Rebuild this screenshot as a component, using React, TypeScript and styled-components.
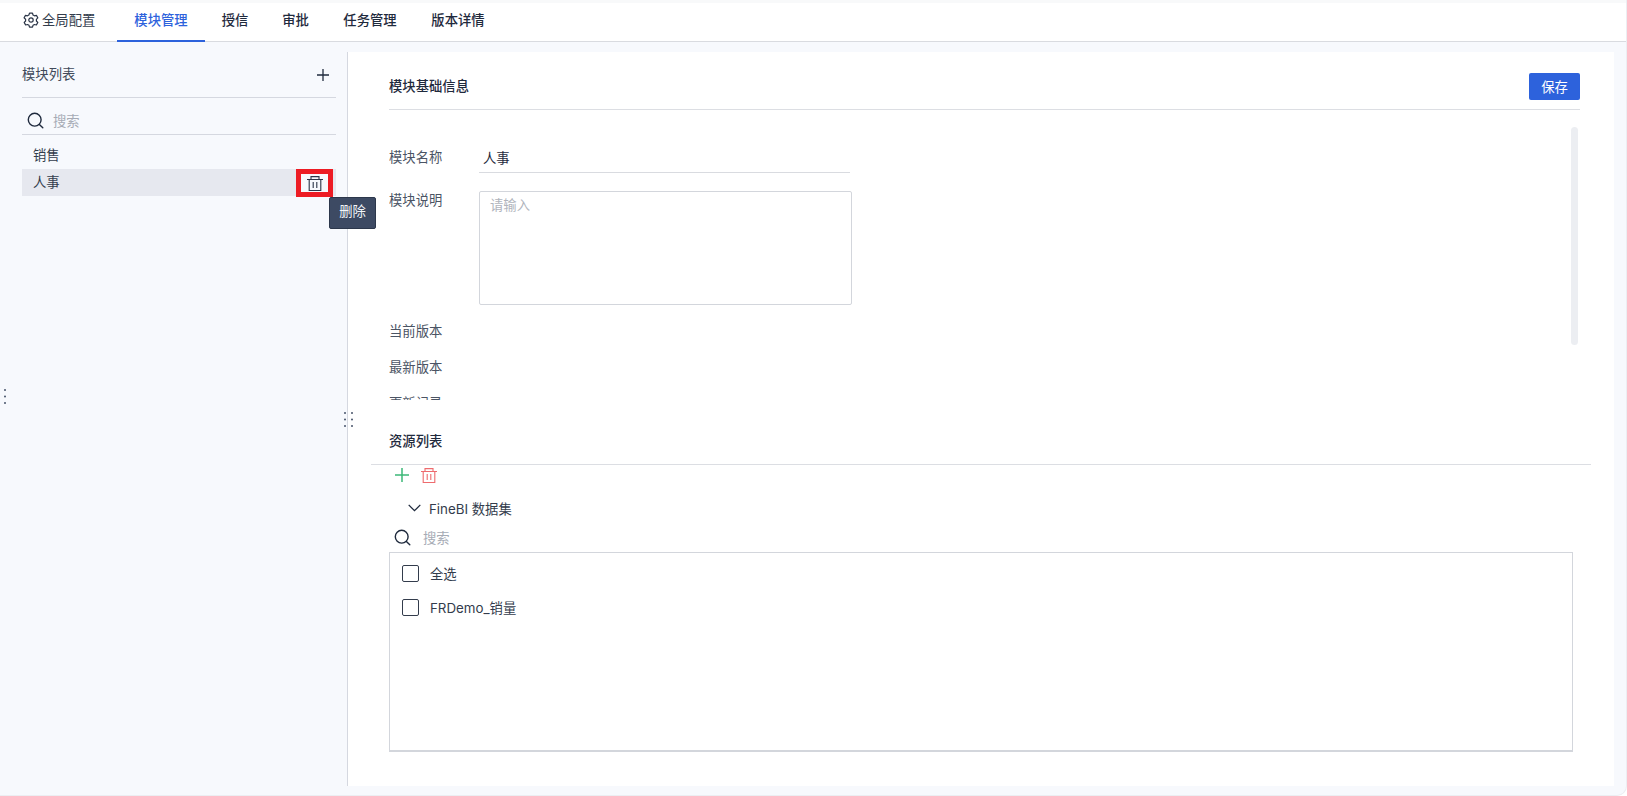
import styled, { createGlobalStyle } from "styled-components";

const GlobalStyle = createGlobalStyle`
    html, body {
        margin: 0;
        padding: 0;
        background: #ffffff;
        font-family: Inter, "Noto Sans CJK SC", "Liberation Sans", sans-serif;
    }
    * {
        box-sizing: border-box;
    }
`;

const Page = styled.div`
    position: relative;
    width: 1627px;
    height: 796px;
    display: flex;
    flex-direction: column;
    overflow: hidden;
    background: #f7f9fd;
    border-bottom-right-radius: 10px;
    border-right: 1px solid #eceef2;
    border-bottom: 1px solid #eceef2;
    font-size: 13.33px;
    color: #1f2a3d;
`;

const Header = styled.div`
    height: 42px;
    flex: none;
    display: flex;
    align-items: stretch;
    background: #fff;
    border-top: 3px solid #f8f9fa;
    border-bottom: 1px solid #d9dbe0;
    padding-left: 23px;
`;

const GlobalTab = styled.div`
    width: 94px;
    display: flex;
    align-items: center;
    gap: 3px;
    padding-bottom: 5px;
    color: #333c4c;
`;

const Tab = styled.div<{ $active?: boolean; $width: number }>`
    width: ${(p) => p.$width}px;
    display: flex;
    align-items: center;
    justify-content: center;
    padding-bottom: 5px;
    margin-bottom: -1px;
    font-weight: 500;
    color: ${(p) => (p.$active ? "#2d62dc" : "#1f2a3d")};
    border-bottom: 2px solid ${(p) => (p.$active ? "#2d62dc" : "transparent")};
`;

const Body = styled.div`
    flex: 1;
    min-height: 0;
    display: flex;
    padding: 10px 12px 9px 0;
`;

const Sidebar = styled.div`
    width: 348px;
    flex: none;
    padding: 0 11px 0 22px;
    border-right: 1px solid #d5d8e0;
`;

const SideHead = styled.div`
    height: 46px;
    display: flex;
    align-items: center;
    justify-content: space-between;
    padding-right: 7px;
    border-bottom: 1px solid #d5d8e0;
    color: #414a5a;
`;

const SideTitle = styled.span`
    margin-bottom: 3px;
`;

const SearchRow = styled.div<{ $gap: number; $pad: number; $height: number }>`
    height: ${(p) => p.$height}px;
    display: flex;
    align-items: center;
    gap: ${(p) => p.$gap}px;
    padding-left: ${(p) => p.$pad}px;
    color: #a6abb5;
`;

const SideSearch = styled(SearchRow)`
    padding-top: 8px;
    border-bottom: 1px solid #d5d8e0;
`;

const ResourceSearch = styled(SearchRow)`
    padding-bottom: 2px;
`;

const ModuleList = styled.div`
    margin-top: 7px;
`;

const ModuleRow = styled.div<{ $selected?: boolean }>`
    position: relative;
    height: 27px;
    display: flex;
    align-items: center;
    padding: 0 0 2px 11px;
    background: ${(p) => (p.$selected ? "#e6e8ef" : "transparent")};
    color: #333c4c;
`;

const RedMark = styled.div`
    position: absolute;
    right: 3px;
    top: 0;
    width: 37px;
    height: 28px;
    display: flex;
    align-items: center;
    justify-content: center;
    background: #f7f9fd;
    border: 5px solid #ed1c24;
`;

const Tooltip = styled.div`
    position: absolute;
    left: 329px;
    top: 197px;
    width: 47px;
    height: 32px;
    display: flex;
    align-items: center;
    justify-content: center;
    padding-bottom: 5px;
    border-radius: 2px;
    border: 1px solid #2c374b;
    background: #3d4a63;
    color: #f2f5f9;
    z-index: 3;
`;

const Main = styled.div`
    flex: 1;
    min-width: 0;
    display: flex;
    flex-direction: column;
    background: #fff;
`;

const TopSection = styled.div`
    position: relative;
    height: 348px;
    flex: none;
    display: flex;
    flex-direction: column;
    padding: 0 34px 0 41px;
`;

const TitleRow = styled.div`
    height: 58px;
    flex: none;
    display: flex;
    align-items: flex-start;
    justify-content: space-between;
    padding-top: 21px;
    border-bottom: 1px solid #dcdee3;
`;

const SectionTitle = styled.div`
    font-weight: 500;
    line-height: 27px;
    color: #1f2a3d;
`;

const SaveButton = styled.button`
    width: 51px;
    height: 27px;
    padding: 0;
    border: 0;
    border-radius: 2px;
    background: #2d62dc;
    color: #fff;
    font: inherit;
`;

const FormScroll = styled.div`
    flex: 1;
    min-height: 0;
    overflow: hidden;
    padding-top: 34px;
`;

const FormRow = styled.div<{ $height: number }>`
    display: flex;
    align-items: flex-start;
    height: ${(p) => p.$height}px;
`;

const Label = styled.div<{ $lift?: number }>`
    width: 90px;
    flex: none;
    line-height: 26px;
    margin-top: ${(p) => -(p.$lift ?? 0)}px;
    color: #4b5464;
`;

const NameInput = styled.div`
    width: 371px;
    height: 29px;
    padding-left: 4px;
    line-height: 28px;
    border-bottom: 1px solid #d9dbe0;
    color: #1f2a3d;
`;

const TextArea = styled.div`
    width: 373px;
    height: 114px;
    padding: 4px 10px;
    line-height: 18px;
    border: 1px solid #d3d6dc;
    border-radius: 2px;
    color: #b0b4bc;
`;

const ScrollThumb = styled.div`
    position: absolute;
    right: 36px;
    top: 75px;
    width: 7px;
    height: 218px;
    border-radius: 4px;
    background: #eceef2;
`;

const ResourceSection = styled.div`
    flex: 1;
    min-height: 0;
    margin: 0 23px;
    display: flex;
    flex-direction: column;
`;

const ResourceHead = styled.div`
    height: 65px;
    flex: none;
    display: flex;
    align-items: center;
    padding: 19px 0 0 18px;
    border-bottom: 1px solid #dcdee3;
`;

const ActionBar = styled.div`
    height: 20px;
    display: flex;
    align-items: center;
    gap: 12px;
    padding-left: 24px;
`;

const TreeRow = styled.div`
    height: 34px;
    margin-top: 6px;
    display: flex;
    align-items: center;
    gap: 8px;
    padding-left: 37px;
    color: #333c4c;
`;

const ListBox = styled.div`
    margin-left: 18px;
    width: 1184px;
    height: 200px;
    padding-top: 3px;
    border: 1px solid #d3d6dc;
    border-bottom-width: 2px;
`;

const CheckRow = styled.div`
    height: 34px;
    display: flex;
    align-items: center;
    gap: 11px;
    padding-left: 12px;
    color: #333c4c;
`;

const CheckBox = styled.span`
    width: 17px;
    height: 17px;
    border: 1.3px solid #333c4c;
    border-radius: 2px;
`;

const Handle = styled.svg<{ $left: number; $top: number }>`
    position: absolute;
    left: ${(p) => p.$left}px;
    top: ${(p) => p.$top}px;
`;

function GearIcon() {
    return (
        <svg width="16" height="16" viewBox="0 0 16 16" fill="none" stroke="#2b3547" strokeWidth="1.2" strokeLinejoin="round">
            <path d="M6.5 1.3h3l.5 1.9 1.5.8 1.9-.5 1.4 2.6-1.4 1.4v1.7l1.4 1.4-1.4 2.6-1.9-.5-1.5.8-.5 1.9h-3l-.5-1.9-1.5-.8-1.9.5-1.4-2.6 1.4-1.4V7.5L1.1 6.1l1.4-2.6 1.9.5 1.5-.8z" transform="translate(0 -.2)" />
            <circle cx="8" cy="8" r="2.2" />
        </svg>
    );
}

function SearchIcon() {
    return (
        <svg width="17" height="17" viewBox="0 0 17 17" fill="none" stroke="#1f2a3d" strokeWidth="1.4" strokeLinecap="round">
            <circle cx="7.7" cy="7.7" r="6.4" />
            <path d="M12.4 12.4l3.4 3.4" />
        </svg>
    );
}

function PlusIcon({ color, size }: { color: string; size: number }) {
    return (
        <svg width={size} height={size} viewBox="0 0 14 14" fill="none" stroke={color} strokeWidth="1.5">
            <path d="M7 0v14M0 7h14" />
        </svg>
    );
}

function TrashIcon({ color }: { color: string }) {
    return (
        <svg width="16" height="15" viewBox="0 0 16 15" fill="none" stroke={color} strokeWidth="1.1">
            <path d="M0 3.5h16M4 3.5V.6h8v2.9M2.2 3.5v11h11.6v-11M6.2 6v6M9.8 6v6" />
        </svg>
    );
}

function Chevron() {
    return (
        <svg width="13" height="8" viewBox="0 0 13 8" fill="none" stroke="#1f2a3d" strokeWidth="1.3">
            <path d="M.7.9l5.8 5.8L12.3.9" />
        </svg>
    );
}

function DotsColumn({ left, top, columns }: { left: number; top: number; columns: number }) {
    const xs = columns === 2 ? [1, 8] : [1];
    return (
        <Handle $left={left} $top={top} width={columns === 2 ? 9 : 2} height="16" viewBox={`0 0 ${columns === 2 ? 9 : 2} 16`} fill="#47536a">
            {xs.map((x) =>
                [1, 7.5, 14].map((y) => <circle key={`${x}-${y}`} cx={x} cy={y} r="1" />)
            )}
        </Handle>
    );
}

export default function App() {
    return (
        <>
            <GlobalStyle />
            <Page>
                <Header>
                    <GlobalTab>
                        <GearIcon />
                        全局配置
                    </GlobalTab>
                    <Tab $active $width={88}>模块管理</Tab>
                    <Tab $width={60}>授信</Tab>
                    <Tab $width={61}>审批</Tab>
                    <Tab $width={88}>任务管理</Tab>
                    <Tab $width={88}>版本详情</Tab>
                </Header>
                <Body>
                    <Sidebar>
                        <SideHead>
                            <SideTitle>模块列表</SideTitle>
                            <PlusIcon color="#1f2a3d" size={12} />
                        </SideHead>
                        <SideSearch $gap={9} $pad={5} $height={37}>
                            <SearchIcon />
                            搜索
                        </SideSearch>
                        <ModuleList>
                            <ModuleRow>销售</ModuleRow>
                            <ModuleRow $selected>
                                人事
                                <RedMark>
                                    <TrashIcon color="#2b3547" />
                                </RedMark>
                            </ModuleRow>
                        </ModuleList>
                    </Sidebar>
                    <Main>
                        <TopSection>
                            <TitleRow>
                                <SectionTitle>模块基础信息</SectionTitle>
                                <SaveButton>保存</SaveButton>
                            </TitleRow>
                            <FormScroll>
                                <FormRow $height={47}>
                                    <Label>模块名称</Label>
                                    <NameInput>人事</NameInput>
                                </FormRow>
                                <FormRow $height={127}>
                                    <Label $lift={4}>模块说明</Label>
                                    <TextArea>请输入</TextArea>
                                </FormRow>
                                <FormRow $height={36}>
                                    <Label>当前版本</Label>
                                </FormRow>
                                <FormRow $height={36}>
                                    <Label>最新版本</Label>
                                </FormRow>
                                <FormRow $height={36}>
                                    <Label>更新记录</Label>
                                </FormRow>
                            </FormScroll>
                            <ScrollThumb />
                        </TopSection>
                        <ResourceSection>
                            <ResourceHead>
                                <SectionTitle>资源列表</SectionTitle>
                            </ResourceHead>
                            <ActionBar>
                                <PlusIcon color="#3cb878" size={14} />
                                <TrashIcon color="#ee6b6e" />
                            </ActionBar>
                            <TreeRow>
                                <Chevron />
                                FineBI 数据集
                            </TreeRow>
                            <ResourceSearch $gap={12} $pad={23} $height={27}>
                                <SearchIcon />
                                搜索
                            </ResourceSearch>
                            <ListBox>
                                <CheckRow>
                                    <CheckBox />
                                    全选
                                </CheckRow>
                                <CheckRow>
                                    <CheckBox />
                                    FRDemo_销量
                                </CheckRow>
                            </ListBox>
                        </ResourceSection>
                    </Main>
                </Body>
                <Tooltip>删除</Tooltip>
                <DotsColumn left={4} top={389} columns={1} />
                <DotsColumn left={344} top={412} columns={2} />
            </Page>
        </>
    );
}
